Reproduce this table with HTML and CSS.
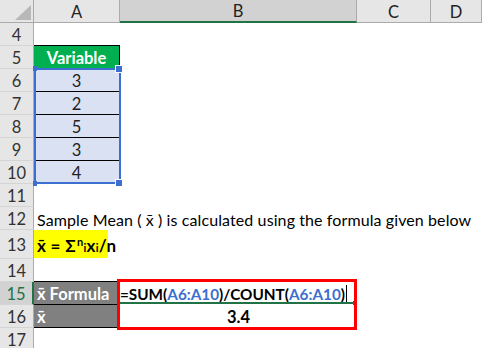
FILE: index.html
```html
<!DOCTYPE html>
<html>
<head>
<meta charset="utf-8">
<link rel="stylesheet" href="styles.css">
</head>
<body>
<div class="sheet">
  <div class="hdr">
    <div class="corner"><span class="tri"></span></div>
    <div class="ch ca">A</div>
    <div class="ch cb sel">B</div>
    <div class="ch cc">C</div>
    <div class="ch cd">D</div>
  </div>

  <div class="row"><div class="rh">4</div><div class="c ca"></div><div class="c rest"></div></div>
  <div class="row"><div class="rh">5</div><div class="c ca var">Variable</div><div class="c rest"></div></div>
  <div class="row"><div class="rh">6</div><div class="c ca val first">3
      <div class="selbox"><span class="hd tl"></span><span class="hd tr"></span><span class="hd bl"></span><span class="hd br"></span></div>
    </div><div class="c rest"></div></div>
  <div class="row"><div class="rh">7</div><div class="c ca val">2</div><div class="c rest"></div></div>
  <div class="row"><div class="rh">8</div><div class="c ca val">5</div><div class="c rest"></div></div>
  <div class="row"><div class="rh">9</div><div class="c ca val">3</div><div class="c rest"></div></div>
  <div class="row"><div class="rh">10</div><div class="c ca val">4</div><div class="c rest"></div></div>
  <div class="row"><div class="rh">11</div><div class="c rest"></div></div>
  <div class="row"><div class="rh">12</div><div class="c rest txt">Sample Mean ( x̄ ) is calculated using the formula given below</div></div>
  <div class="row tall"><div class="rh">13</div><div class="c rest"><span class="hl">x̄ = Σ<sup>n</sup><sub>i</sub>x<sub>i</sub>/n</span></div></div>
  <div class="row"><div class="rh">14</div><div class="c ca"></div><div class="c rest"></div></div>
  <div class="row"><div class="rh act">15</div><div class="c ca dark first">x̄ Formula</div><div class="c cb formula"><span>=SUM(</span><span class="ref">A6:A10</span><span>)/COUNT(</span><span class="ref">A6:A10</span><span>)</span><span class="caret"></span>
      <span class="fillh"></span>
      <div class="redbox"></div>
    </div><div class="c rest"></div></div>
  <div class="row"><div class="rh">16</div><div class="c ca dark">x̄</div><div class="c cb result">3.4</div><div class="c rest"></div></div>
  <div class="row"><div class="rh">17</div><div class="c rest"></div></div>
</div>
</body>
</html>
```

FILE: styles.css
```css
body {
  margin: 0;
  background: #ffffff;
  font-family: Lato, "Liberation Sans", sans-serif;
}

.sheet {
  width: 482px;
  height: 348px;
  overflow: hidden;
}

.hdr {
  display: flex;
  height: 23px;
}

.corner {
  position: relative;
  width: 34px;
  flex: none;
  box-sizing: border-box;
  background: #e6e6e6;
  border-right: 1px solid #ababab;
  border-bottom: 1px solid #ababab;
}

.tri {
  position: absolute;
  right: 2px;
  bottom: 2px;
  width: 16px;
  height: 15px;
  background: #b8b8b8;
  clip-path: polygon(100% 0, 100% 100%, 0 100%);
}

.ch {
  box-sizing: border-box;
  background: #e6e6e6;
  border-right: 1px solid #ababab;
  border-bottom: 1px solid #ababab;
  display: flex;
  align-items: center;
  justify-content: center;
  font-size: 16.5px;
  color: #222222;
  padding-top: 1px;
}

.ch.sel {
  background: #d2d2d2;
  border-bottom: 2px solid #217346;
}

.ca {
  width: 86px;
  flex: none;
}

.cb {
  width: 237px;
  flex: none;
}

.cc {
  width: 74px;
  flex: none;
}

.cd,
.rest {
  flex: 1;
  min-width: 0;
}

.row {
  display: flex;
  height: 23px;
}

.row.tall {
  height: 29px;
}

.rh {
  width: 34px;
  flex: none;
  box-sizing: border-box;
  background: #e6e6e6;
  border-right: 1px solid #ababab;
  border-bottom: 1px solid #d4d4d4;
  display: flex;
  align-items: center;
  justify-content: center;
  font-size: 16.5px;
  color: #333333;
  padding-top: 1px;
}

.rh.act {
  color: #217346;
  background: #d2d2d2;
  border-right: 2px solid #217346;
}

.c {
  box-sizing: border-box;
  display: flex;
  align-items: center;
  font-size: 16px;
  color: #000000;
  white-space: nowrap;
}

.var {
  justify-content: center;
  background: #00b050;
  color: #ffffff;
  font-weight: 700;
  font-size: 16.5px;
  border-right: 1px solid #000000;
  border-bottom: 1px solid #000000;
  box-shadow: 0 -1px 0 #000000;
  padding-top: 1px;
}

.val {
  justify-content: center;
  background: #d9e1f2;
  border-right: 1px solid #000000;
  border-bottom: 1px solid #000000;
  color: #222222;
  font-size: 16.5px;
  padding-top: 1px;
}

.first {
  position: relative;
}

.selbox {
  position: absolute;
  left: 0;
  top: -1px;
  width: 87px;
  height: 116px;
  box-sizing: border-box;
  border: 2px solid #3c6fcf;
}

.hd {
  position: absolute;
  background: #3c6fcf;
}

.hd.tl {
  left: -3px;
  top: -4px;
  width: 4px;
  height: 5px;
}

.hd.bl {
  left: -3px;
  bottom: -4px;
  width: 4px;
  height: 5px;
}

.hd.tr {
  right: -4px;
  top: -5px;
  width: 6px;
  height: 6px;
  border: 1px solid #ffffff;
}

.hd.br {
  right: -4px;
  bottom: -5px;
  width: 6px;
  height: 6px;
  border: 1px solid #ffffff;
}

.txt {
  padding-left: 3px;
  padding-top: 1px;
  font-size: 16px;
  letter-spacing: 0.1px;
}

.hl {
  display: inline-flex;
  align-items: center;
  box-sizing: border-box;
  width: 74px;
  height: 28px;
  margin-bottom: 1px;
  padding-left: 3px;
  padding-top: 2px;
  background: #ffff00;
  font-weight: 700;
  font-size: 17px;
  letter-spacing: 0.3px;
}

.hl sup,
.hl sub {
  font-size: 11px;
  line-height: 0;
}

.hl sup {
  position: relative;
  top: -3px;
  margin-left: 1px;
}

.hl sub {
  position: relative;
  top: 3px;
}

.dark {
  background: #808080;
  color: #ffffff;
  font-weight: 700;
  font-size: 16.5px;
  padding-left: 3px;
  padding-top: 1px;
  border-right: 1px solid #000000;
  border-bottom: 1px solid #000000;
  box-shadow: 0 -1px 0 #000000;
}

.formula {
  position: relative;
  font-weight: 700;
  font-size: 15.3px;
  padding-top: 1px;
}

.formula::after {
  content: "";
  position: absolute;
  left: 0;
  right: 4px;
  bottom: 1px;
  height: 2px;
  background: #217346;
}

.ref {
  color: #3c6fcf;
}

.caret {
  display: inline-block;
  width: 1px;
  height: 19px;
  margin-left: 1px;
  background: #000000;
}

.fillh {
  position: absolute;
  right: 0;
  bottom: 0;
  width: 4px;
  height: 4px;
  background: #217346;
}

.redbox {
  position: absolute;
  left: -3px;
  top: -3px;
  width: 240px;
  height: 51px;
  box-sizing: border-box;
  border: 3px solid #ff0000;
}

.result {
  justify-content: center;
  font-weight: 700;
  font-size: 16.5px;
  padding-top: 1px;
}
```
